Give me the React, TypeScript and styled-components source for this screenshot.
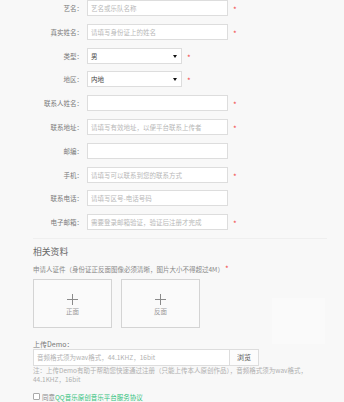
import React from 'react';
import styled, { createGlobalStyle } from 'styled-components';

const GlobalStyle = createGlobalStyle`
  html, body {
    margin: 0;
    padding: 0;
    background: #f8f8f8;
    overflow: hidden;
  }
  body {
    font-family: "Noto Sans CJK SC", "Noto Sans", sans-serif;
    color: #777;
  }
`;

type Field = {
  label: string
  placeholder?: string
  value?: string
  select?: boolean
  required?: boolean
}

const FIELDS: Field[] = [
  { label: '艺名：', placeholder: '艺名或乐队名称', required: true },
  { label: '真实姓名：', placeholder: '请填写身份证上的姓名', required: true },
  { label: '类型：', value: '男', select: true, required: true },
  { label: '地区：', value: '内地', select: true, required: true },
  { label: '联系人姓名：', required: true },
  { label: '联系地址：', placeholder: '请填写有效地址，以便平台联系上传者', required: true },
  { label: '邮编：' },
  { label: '手机：', placeholder: '请填写可以联系到您的联系方式', required: true },
  { label: '联系电话：', placeholder: '请填写区号-电话号码' },
  { label: '电子邮箱：', placeholder: '需要登录邮箱验证，验证后注册才完成', required: true },
];

function App() {
  return (
    <>
      <GlobalStyle />
      <Page>
        <Form>
          {FIELDS.map((f) => (
            <Row key={f.label}>
              <Label>{f.label}</Label>
              {f.select ? (
                <SelectBox>
                  <span>{f.value}</span>
                  <Arrow />
                </SelectBox>
              ) : (
                <TextInput placeholder={f.placeholder} />
              )}
              {f.required && <Star>*</Star>}
            </Row>
          ))}
        </Form>

        <Divider />

        <Section>
          <Heading>相关资料</Heading>
          <Hint>
            申请人证件（身份证正反面图像必须清晰，图片大小不得超过4M）<Star $inline>*</Star>
          </Hint>
          <Uploads>
            <UploadBox>
              <Plus />
              <UploadText>正面</UploadText>
            </UploadBox>
            <UploadBox>
              <Plus />
              <UploadText>反面</UploadText>
            </UploadBox>
          </Uploads>

          <DemoTitle>上传Demo：</DemoTitle>
          <FileRow>
            <FileInput placeholder="音频格式须为wav格式，44.1KHZ，16bit" />
            <BrowseButton type="button">浏览</BrowseButton>
          </FileRow>
          <Note>
            注：上传Demo有助于帮助您快速通过注册（只能上传本人原创作品），音频格式须为wav格式，44.1KHZ，16bit
          </Note>

          <Agree>
            <CheckBox />
            同意<GreenLink>QQ音乐原创音乐平台服务协议</GreenLink>
          </Agree>
        </Section>

        <FloatPanel />
      </Page>
    </>
  );
}

const Page = styled.div`
  position: relative;
  width: 344px;
  height: 402px;
  overflow: hidden;
`;

const Form = styled.div`
  padding-left: 20px;
`;

const Row = styled.div`
  display: flex;
  align-items: center;
  height: 16px;
  margin-bottom: 7.8px;
`;

const Label = styled.label`
  width: 67px;
  box-sizing: border-box;
  padding-right: 4px;
  text-align: right;
  font-size: 6.5px;
  color: #7a7a7a;
  white-space: nowrap;
`;

const TextInput = styled.input`
  width: 141px;
  height: 16px;
  box-sizing: border-box;
  border: 1px solid #ddd;
  background: #fff;
  padding: 0 3px;
  font-family: inherit;
  font-size: 6.5px;
  color: #333;
  outline: none;
  &::placeholder {
    color: #b8b8b8;
  }
`;

const SelectBox = styled.div`
  position: relative;
  display: flex;
  align-items: center;
  width: 95px;
  height: 16px;
  box-sizing: border-box;
  border: 1px solid #ddd;
  background: #fff;
  padding: 0 3px;
  font-size: 6.5px;
  color: #444;
`;

const Arrow = styled.i`
  position: absolute;
  right: 4px;
  top: 6px;
  width: 0;
  height: 0;
  border-left: 2px solid transparent;
  border-right: 2px solid transparent;
  border-top: 3px solid #111;
`;

const Star = styled.span<{ $inline?: boolean }>`
  color: #f24a4a;
  font-size: 8px;
  line-height: 1;
  margin-left: ${(p) => (p.$inline ? '1px' : '5px')};
  position: relative;
  top: ${(p) => (p.$inline ? '0' : '2px')};
`;

const Divider = styled.hr`
  border: none;
  border-top: 1px solid #efefef;
  margin: 0 17px 0 33px;
  position: relative;
  top: 0.5px;
`;

const Section = styled.div`
  padding-left: 33px;
`;

const Heading = styled.h3`
  margin: 7px 0 0;
  font-size: 8.8px;
  line-height: 12px;
  font-weight: normal;
  color: #666;
`;

const Hint = styled.p`
  margin: 6px 0 0;
  font-size: 6.5px;
  line-height: 10px;
  color: #888;
`;

const Uploads = styled.div`
  display: flex;
  gap: 9px;
  margin-top: 5px;
`;

const UploadBox = styled.div`
  width: 79px;
  height: 49px;
  box-sizing: border-box;
  border: 1px solid #d4d4d4;
  background: #fafafa;
  display: flex;
  flex-direction: column;
  align-items: center;
  padding-top: 14px;
`;

const Plus = styled.div`
  position: relative;
  width: 11px;
  height: 11px;
  &::before, &::after {
    content: '';
    position: absolute;
    background: #8a8a8a;
  }
  &::before {
    left: 0;
    right: 0;
    top: 5px;
    height: 1.4px;
  }
  &::after {
    top: 0;
    bottom: 0;
    left: 5px;
    width: 1.4px;
  }
`;

const UploadText = styled.span`
  margin-top: 2px;
  font-size: 6.5px;
  line-height: 9px;
  color: #999;
`;

const DemoTitle = styled.div`
  margin-top: 11px;
  font-size: 7px;
  line-height: 10px;
  color: #777;
`;

const FileRow = styled.div`
  display: flex;
  height: 17px;
`;

const FileInput = styled.input`
  width: 196px;
  height: 17px;
  box-sizing: border-box;
  border: 1px solid #ddd;
  border-right: none;
  background: #fff;
  padding: 0 3px;
  font-family: inherit;
  font-size: 6.5px;
  outline: none;
  &::placeholder {
    color: #b3b3b3;
  }
`;

const BrowseButton = styled.button`
  width: 30px;
  height: 17px;
  padding: 0;
  border: 1px solid #ddd;
  background: #fcfcfc;
  font-family: inherit;
  font-size: 7px;
  color: #555;
`;

const Note = styled.p`
  margin: 0;
  width: 276px;
  font-size: 6.5px;
  line-height: 9.5px;
  color: #b0b0b0;
`;

const Agree = styled.label`
  display: flex;
  align-items: center;
  margin-top: 7px;
  font-size: 6.5px;
  line-height: 10px;
  color: #888;
`;

const CheckBox = styled.span`
  width: 5px;
  height: 5px;
  border: 1px solid #aaa;
  border-radius: 1px;
  background: #fff;
  margin-right: 2px;
`;

const GreenLink = styled.a`
  color: #31c27c;
  text-decoration: none;
`;

const FloatPanel = styled.div`
  position: absolute;
  left: 272px;
  top: 298px;
  width: 53px;
  height: 46px;
  background: #fafafa;
`;

export default App;
